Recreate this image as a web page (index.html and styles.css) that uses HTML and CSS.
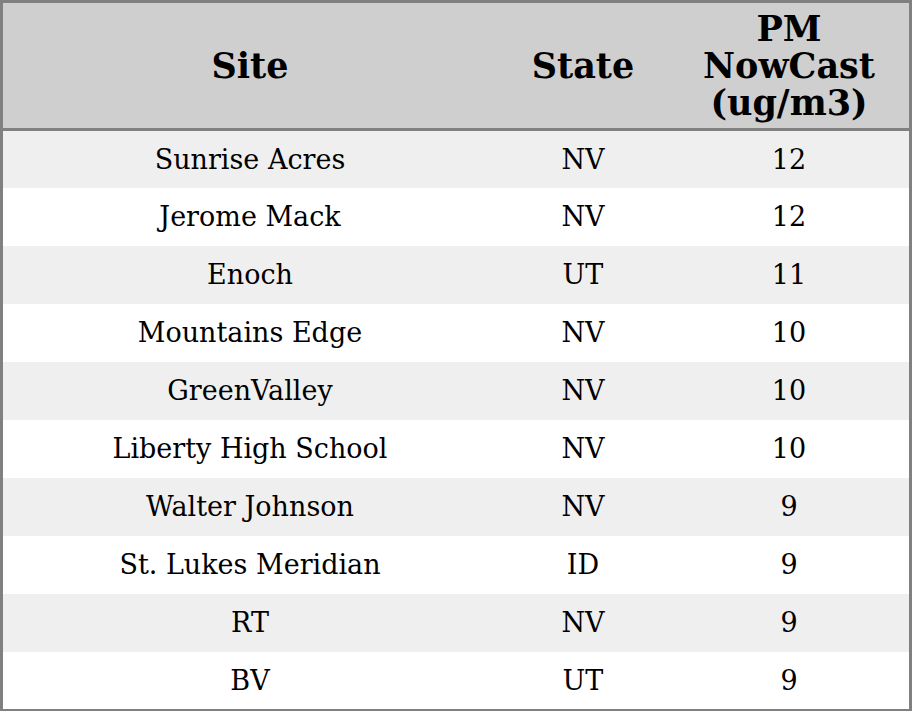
FILE: index.html
```html
<!DOCTYPE html>
<html>
<head>
<meta charset="utf-8">
<link rel="stylesheet" href="styles.css">
</head>
<body>
<table class="aq">
  <colgroup>
    <col class="c-site">
    <col class="c-state">
    <col class="c-pm">
  </colgroup>
  <thead>
    <tr><th>Site</th><th>State</th><th>PM<br>NowCast<br>(ug/m3)</th></tr>
  </thead>
  <tbody>
    <tr><td>Sunrise Acres</td><td>NV</td><td>12</td></tr>
    <tr><td>Jerome Mack</td><td>NV</td><td>12</td></tr>
    <tr><td>Enoch</td><td>UT</td><td>11</td></tr>
    <tr><td>Mountains Edge</td><td>NV</td><td>10</td></tr>
    <tr><td>GreenValley</td><td>NV</td><td>10</td></tr>
    <tr><td>Liberty High School</td><td>NV</td><td>10</td></tr>
    <tr><td>Walter Johnson</td><td>NV</td><td>9</td></tr>
    <tr><td>St. Lukes Meridian</td><td>ID</td><td>9</td></tr>
    <tr><td>RT</td><td>NV</td><td>9</td></tr>
    <tr><td>BV</td><td>UT</td><td>9</td></tr>
  </tbody>
</table>
</body>
</html>
```
FILE: styles.css
```css
html, body {
  margin: 0;
  padding: 0;
  background: #ffffff;
}
.aq {
  width: 912px;
  height: 711px;
  border-collapse: separate;
  border-spacing: 0;
  border: 3px solid #808080;
  box-sizing: border-box;
  table-layout: fixed;
  font-family: "DejaVu Serif", serif;
  color: #000;
}
.c-site { width: 494px; }
.c-state { width: 172px; }
.c-pm { width: 240px; }
.aq th {
  background: #cfcfcf;
  font-size: 35px;
  font-weight: bold;
  line-height: 37px;
  height: 125px;
  padding: 0;
  text-align: center;
  vertical-align: middle;
  border-bottom: 3px solid #808080;
}
.aq td {
  font-size: 27px;
  line-height: 32px;
  height: 58px;
  padding: 0;
  text-align: center;
  vertical-align: middle;
}
.aq tbody tr:first-child td {
  height: 56px;
  padding-top: 1px;
}
.aq tbody tr:last-child td {
  height: 57px;
}
.aq tbody tr:nth-child(odd) td {
  background: #efefef;
}
.aq tbody tr:nth-child(even) td {
  background: #ffffff;
}
```
